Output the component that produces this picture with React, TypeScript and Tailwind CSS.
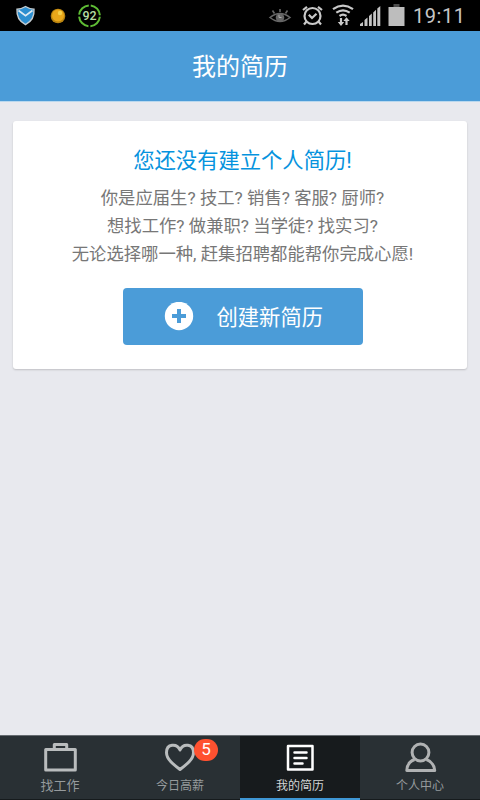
import type { ReactNode } from "react";

function StatusBar() {
  return (
    <div className="flex h-[31px] shrink-0 items-start bg-black">
      <svg width="120" height="31" viewBox="0 0 120 31">
        <path d="M25.5 6.5Q21 9.2 17 9.3Q16.2 20 25.5 24.6Q34.8 20 34 9.3Q30 9.2 25.5 6.5Z" fill="#2c8fd0" stroke="#c4ccd1" strokeWidth="1.4" />
        <path d="M18.5 10.5L25.5 15.8L32.5 10.5" fill="none" stroke="#dceaf2" strokeWidth="1.7" />
        <circle cx="58" cy="16" r="7.3" fill="#b98410" />
        <circle cx="58" cy="15.5" r="6" fill="#eaa81a" />
        <circle cx="60" cy="13" r="2.2" fill="#f6d04a" />
        <circle cx="89.5" cy="15.8" r="10.4" fill="none" stroke="#5fbd35" strokeWidth="2" strokeDasharray="14.3 2.036" strokeDashoffset="-1" />
        <text x="89.5" y="20.4" textAnchor="middle" fontSize="12.5" fontFamily="Roboto, sans-serif" fontWeight="500" fill="#b5dca2">92</text>
      </svg>
      <svg className="ml-auto" width="220" height="31" viewBox="260 0 220 31" fill="none">
        <g stroke="#666" strokeWidth="1.6">
          <path d="M270 17.5Q280 9.5 290 17.5Q280 25.5 270 17.5Z" />
          <path d="M280 9V12M272.5 10.5L274.5 13.5M287.5 10.5L285.5 13.5" />
          <circle cx="280" cy="17.5" r="3.5" fill="#666" />
        </g>
        <path d="M279 14.8V17.5H281.5" stroke="#aaa" />
        <g stroke="#c9c9c9" strokeWidth="2.2">
          <circle cx="312.5" cy="16" r="8" />
          <path d="M308.8 14.8L312 18L316.5 13.7M303 10L307 6.8M318 6.8L322 10M306.5 21.5L304 24.5M318.5 21.5L321 24.5" />
        </g>
        <g stroke="#c9c9c9" strokeWidth="2.2">
          <path d="M333 9.2Q343 2.2 353 9.2M336.3 12.7Q343 8 349.7 12.7M339.5 16Q343 13.4 346.5 16" />
          <path d="M341 18V24M346.5 25V19" />
        </g>
        <path d="M337.8 22H344.2L341 26ZM343.3 21H349.7L346.5 17.2Z" fill="#c9c9c9" />
        <path d="M360 26V24L363 22V26ZM364.5 26V20L367.5 17.5V26ZM369 26V16L371.8 13.5V26ZM373.2 26V12.5L376 9.8V26ZM377.3 26V8.5L380.3 6V26Z" fill="#c4c4c4" />
        <path d="M393.5 4H399.5V7H393.5Z" fill="#4c4c4c" />
        <path d="M388.5 7H404.5V26H388.5Z" fill="#bdbdbd" />
        <text x="413" y="23" fontSize="20" fontFamily="Roboto, sans-serif" fill="#c6c6c6" textLength="52">19:11</text>
      </svg>
    </div>
  );
}

function Tab({ label, active = false, children }: { label: string; active?: boolean; children: ReactNode }) {
  return (
    <div
      className={
        active
          ? "flex flex-1 flex-col items-center border-b-2 border-[#3f97d5] bg-[#171b1d] text-[#d2d4d5]"
          : "flex flex-1 flex-col items-center border-b border-[#161b1d] bg-[#293034] text-[#969b9d]"
      }
    >
      <div className="relative mt-1.5 h-8 w-10">{children}</div>
      <span className={label.length === 3 ? "mt-0.5 text-[13px] leading-5" : "mt-0.5 text-[12px] leading-5"}>{label}</span>
    </div>
  );
}

export default function App() {
  return (
    <div className="flex h-[800px] w-[480px] flex-col overflow-hidden whitespace-nowrap bg-[#e8e9ee] font-[Roboto,'Noto_Sans_CJK_SC',sans-serif]">
      <StatusBar />
      <header className="flex h-[71px] shrink-0 items-center justify-center border-b border-[#b9d8ee] bg-[#4b9cd8] pt-0.5 text-[24px] text-white">
        我的简历
      </header>
      <main className="flex-1 px-[13px] pt-[19px]">
        <section className="flex h-[248px] flex-col items-center rounded-[3px] bg-white pl-[5px] pt-[25px] shadow-[0_1px_2px_rgba(0,0,0,0.18)]">
          <h1 className="text-[21.3px] leading-[30px] text-[#0593de]">您还没有建立个人简历!</h1>
          <div className="mt-2 flex flex-col items-center text-[17.33px] leading-7 text-[#777]">
            <p>你是应届生? 技工? 销售? 客服? 厨师?</p>
            <p>想找工作? 做兼职? 当学徒? 找实习?</p>
            <p>无论选择哪一种, 赶集招聘都能帮你完成心愿!</p>
          </div>
          <button className="mt-5 flex h-[57px] w-60 items-center rounded bg-[#4b9cd8] pl-[41px] text-[21.3px] text-white">
            <svg width="30" height="30" viewBox="0 0 30 30">
              <circle cx="15" cy="14" r="14.2" fill="white" />
              <path d="M15 7V21M8 14H22" stroke="#4b9cd8" strokeWidth="4" />
            </svg>
            <span className="ml-[23px] pt-0.5">创建新简历</span>
          </button>
        </section>
      </main>
      <nav className="flex h-[65px] shrink-0 border-t border-[#656b70]">
        <Tab label="找工作">
          <svg width="40" height="32" viewBox="0 0 40 32" fill="none" stroke="#b9bcbd" strokeWidth="3" strokeLinejoin="round">
            <path d="M5.7 7.5H35.3V28H5.7ZM14.3 7V2.5H26.7V7" />
          </svg>
        </Tab>
        <Tab label="今日高薪">
          <svg width="40" height="32" viewBox="0 0 40 32" fill="none" stroke="#b9bcbd" strokeWidth="3" strokeLinejoin="round">
            <path d="M20 27.5C14 23 6.5 17.5 6.5 10.5C6.5 1.5 17 1 20 8C23 1 33.5 1.5 33.5 10.5C33.5 17.5 26 23 20 27.5Z" />
          </svg>
          <span className="absolute -top-[3px] left-[34px] flex h-[22px] w-6 items-center justify-center rounded-full bg-[#ff5130] text-[17px] text-white">5</span>
        </Tab>
        <Tab label="我的简历" active>
          <svg width="40" height="32" viewBox="0 0 40 32" fill="none" stroke="white" strokeWidth="2.5" strokeLinejoin="round" strokeLinecap="round">
            <path d="M8 4H32.5V27.5H8Z" />
            <path d="M14.5 10.5H26.5M14.5 16H26.5M14.5 21.5H22.5" />
          </svg>
        </Tab>
        <Tab label="个人中心">
          <svg width="40" height="32" viewBox="0 0 40 32" fill="none" stroke="#b0b2b3" strokeWidth="3" strokeLinejoin="round">
            <circle cx="20.5" cy="10.5" r="8.4" />
            <path d="M14.5 17.5Q7 20.5 6.8 28.5H34.7Q34 20.5 26.5 17.5" />
          </svg>
        </Tab>
      </nav>
    </div>
  );
}
